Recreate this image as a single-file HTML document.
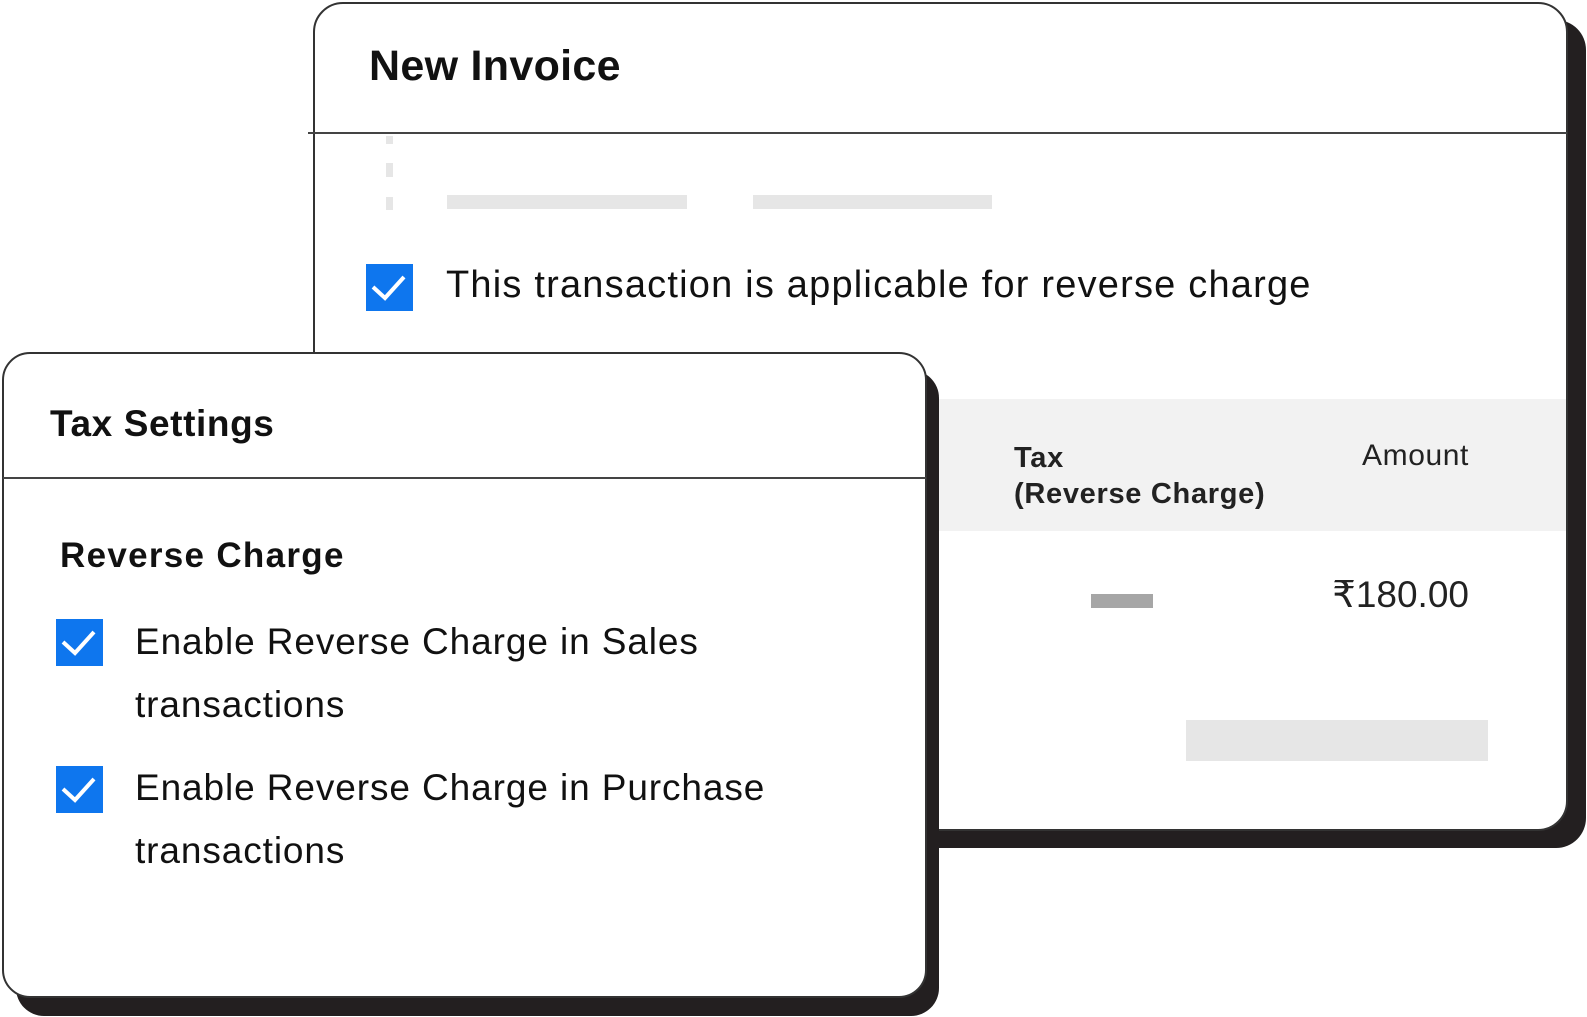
<!DOCTYPE html>
<html><head><meta charset="utf-8"><style>
*{margin:0;padding:0;box-sizing:border-box}
body{width:1587px;height:1017px;background:#fff;position:relative;overflow:hidden;font-family:"Liberation Sans",sans-serif;color:#111}
.a{position:absolute}
.sh{background:#231f20}
.card{background:#fff;border:2px solid #333}
.cb{width:47px;height:47px;background:#0e76ee}
.cb svg{display:block}
.t{white-space:nowrap;line-height:1}
</style></head><body>
<div class="a sh" style="left:333px;top:20px;width:1253px;height:828px;border-radius:30px"></div>
<div class="a card" style="left:313px;top:2px;width:1255px;height:829px;border-radius:30px"></div>
<div class="a" style="left:308px;top:132px;width:1259px;height:2px;background:#444"></div>
<div class="a t" style="left:369px;top:45px;font-size:43px;font-weight:bold;letter-spacing:0.3px">New Invoice</div>
<div class="a" style="left:386px;top:136px;width:7px;height:8px;background:#e6e6e6"></div>
<div class="a" style="left:386px;top:163px;width:7px;height:14px;background:#e6e6e6"></div>
<div class="a" style="left:386px;top:197px;width:7px;height:13px;background:#e6e6e6"></div>
<div class="a" style="left:447px;top:195px;width:240px;height:14px;background:#e6e6e6"></div>
<div class="a" style="left:753px;top:195px;width:239px;height:14px;background:#e6e6e6"></div>
<div class="a cb" style="left:366px;top:264px"><svg width="47" height="47"><path d="M7 23 L19 34 L38 13" stroke="#fff" stroke-width="4" fill="none"/></svg></div>
<div class="a t" style="left:446px;top:266px;font-size:38px;letter-spacing:1.2px">This transaction is applicable for reverse charge</div>
<div class="a" style="left:939px;top:399px;width:627px;height:132px;background:#f2f2f2"></div>
<div class="a t" style="left:1014px;top:440px;font-size:29px;font-weight:bold;color:#222;line-height:36px;letter-spacing:0.7px">Tax<br>(Reverse Charge)</div>
<div class="a t" style="left:1280px;top:441px;width:189px;text-align:right;font-size:30px;color:#222;letter-spacing:0.6px">Amount</div>
<div class="a" style="left:1091px;top:594px;width:62px;height:14px;background:#a6a6a6"></div>
<div class="a t" style="left:1250px;top:576px;width:219px;text-align:right;font-size:37px;color:#222">₹180.00</div>
<div class="a" style="left:1186px;top:720px;width:302px;height:41px;background:#e6e6e6"></div>
<div class="a sh" style="left:16px;top:370px;width:923px;height:646px;border-radius:28px"></div>
<div class="a card" style="left:2px;top:352px;width:925px;height:646px;border-radius:28px"></div>
<div class="a" style="left:3px;top:477px;width:923px;height:2px;background:#444"></div>
<div class="a t" style="left:50px;top:405px;font-size:37px;font-weight:bold;letter-spacing:0.6px">Tax Settings</div>
<div class="a t" style="left:60px;top:538px;font-size:35px;font-weight:bold;letter-spacing:1.3px">Reverse Charge</div>
<div class="a cb" style="left:56px;top:619px"><svg width="47" height="47"><path d="M7 23 L19 34 L38 13" stroke="#fff" stroke-width="4" fill="none"/></svg></div>
<div class="a t" style="left:135px;top:610px;font-size:37px;line-height:63px;letter-spacing:0.9px">Enable Reverse Charge in Sales<br>transactions</div>
<div class="a cb" style="left:56px;top:766px"><svg width="47" height="47"><path d="M7 23 L19 34 L38 13" stroke="#fff" stroke-width="4" fill="none"/></svg></div>
<div class="a t" style="left:135px;top:756px;font-size:37px;line-height:63px;letter-spacing:0.9px">Enable Reverse Charge in Purchase<br>transactions</div>
</body></html>
